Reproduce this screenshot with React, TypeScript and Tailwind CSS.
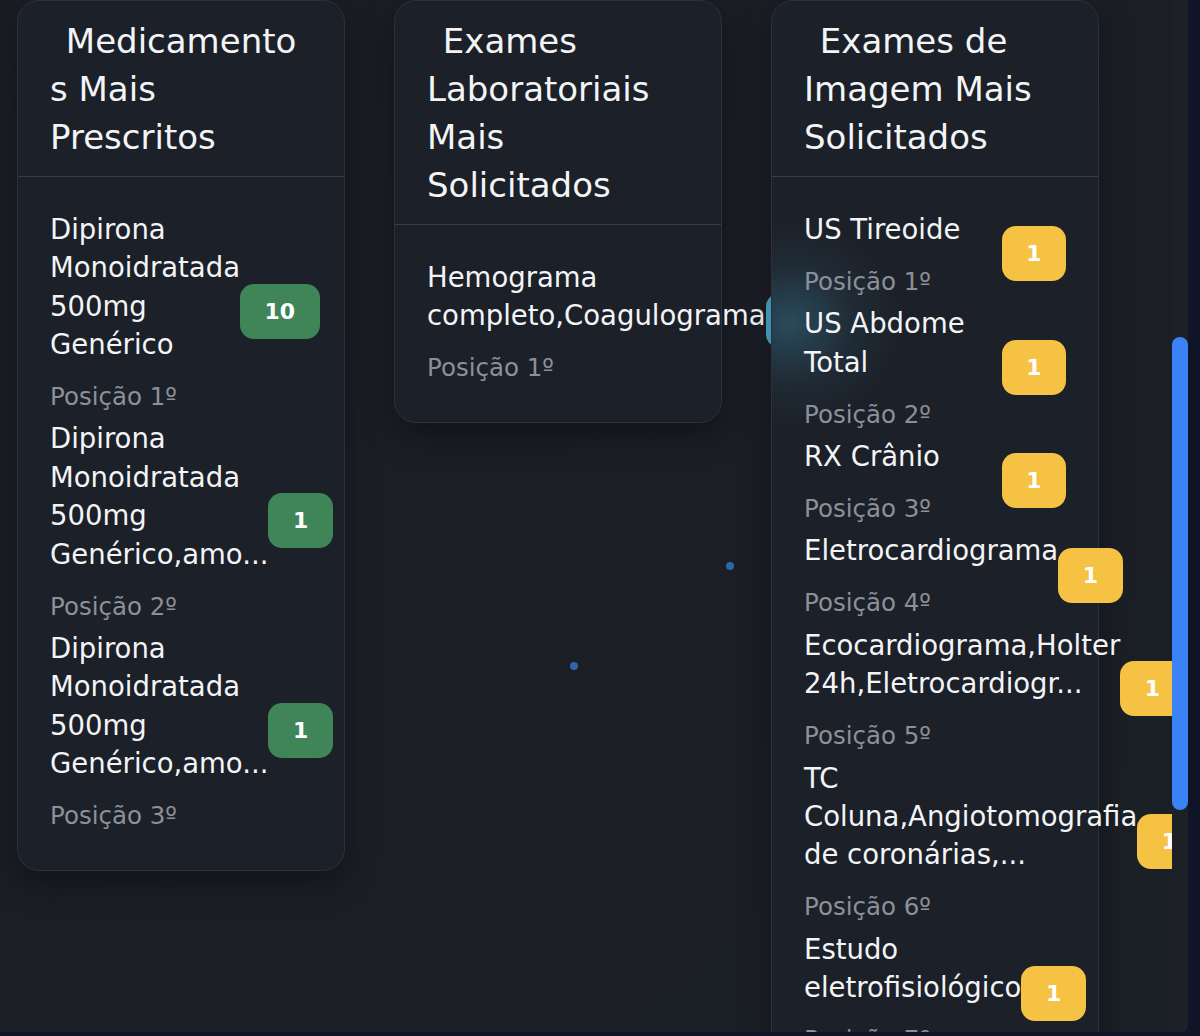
import React from 'react';

type Item = { name: string; count: number; pos: number };

const medicamentos: Item[] = [
  { name: "Dipirona Monoidratada 500mg Genérico", count: 10, pos: 1 },
  { name: "Dipirona Monoidratada 500mg Genérico,amo...", count: 1, pos: 2 },
  { name: "Dipirona Monoidratada 500mg Genérico,amo...", count: 1, pos: 3 },
];

const laboratoriais: Item[] = [
  { name: "Hemograma completo,Coagulograma", count: 1, pos: 1 },
];

const imagem: Item[] = [
  { name: "US Tireoide", count: 1, pos: 1 },
  { name: "US Abdome Total", count: 1, pos: 2 },
  { name: "RX Crânio", count: 1, pos: 3 },
  { name: "Eletrocardiograma", count: 1, pos: 4 },
  { name: "Ecocardiograma,Holter 24h,Eletrocardiogr...", count: 1, pos: 5 },
  { name: "TC Coluna,Angiotomografia de coronárias,...", count: 1, pos: 6 },
  { name: "Estudo eletrofisiológico", count: 1, pos: 7 },
];

function Card({ title, items, badge, glow }: { title: string; items: Item[]; badge: string; glow?: boolean }) {
  return (
    <div
      className={`w-[328px] shrink-0 rounded-[22px] border border-[#2c313b] bg-[#1c2028] shadow-[0_12px_32px_rgba(0,0,0,0.35)] ${
        glow ? 'bg-[image:radial-gradient(ellipse_115px_105px_at_18px_322px,rgba(74,174,211,0.3),rgba(74,174,211,0.08)_55%,transparent)]' : ''
      }`}
    >
      <div className="px-8 pt-4 pb-[15px] border-b border-[#383d47]">
        <h3 className="text-[34px] leading-[48px] text-[#f3f4f6] break-words">
          <span className="pl-[5px]">{'\u00a0'}</span>
          {title}
        </h3>
      </div>
      <div className="px-8 pt-[32.8px] pb-[31px] flex flex-col">
        {items.map((it, i) => (
          <div key={i} className="flex items-center justify-between pb-[6.5px]">
            <div>
              <div className="text-[27.5px] leading-[38.4px] text-[#f3f4f6]">{it.name}</div>
              <div className="mt-[17.5px] text-[24.5px] leading-[32px] text-[#8b9099]">Posição {it.pos}º</div>
            </div>
            <span className={`shrink-0 h-[55px] px-[24.5px] rounded-[14px] flex items-center text-[22px] font-bold text-white ${badge}`}>
              {it.count}
            </span>
          </div>
        ))}
      </div>
    </div>
  );
}

export default function App() {
  return (
    <div className="w-[1200px] h-[1036px] bg-[#0f1526] font-['DejaVu_Sans',sans-serif]">
      <div className="w-[1188px] h-[1032px] flex rounded-br-md overflow-hidden bg-gradient-to-br from-[#1a1d23] via-[#1b1e25] to-[#1b2026]">
        <div className="relative w-[1172px] h-full overflow-hidden">
          <div className="absolute left-[570px] top-[662px] w-2 h-2 rounded-full bg-[#2f66a8]"></div>
          <div className="absolute left-[726px] top-[562px] w-2 h-2 rounded-full bg-[#2f66a8]"></div>
          <div className="flex items-start gap-[49px] pl-[17px]">
            <Card title="Medicamentos Mais Prescritos" items={medicamentos} badge="bg-[#3f8557]" />
            <Card title="Exames Laboratoriais Mais Solicitados" items={laboratoriais} badge="bg-[#4aaed3]" />
            <Card title="Exames de Imagem Mais Solicitados" items={imagem} badge="bg-[#f5c244]" glow />
          </div>
        </div>
        <div className="w-4 h-full bg-[#1d2027]">
          <div className="mt-[337px] h-[473px] w-4 rounded-full bg-[#3b82f6]"></div>
        </div>
      </div>
    </div>
  );
}
